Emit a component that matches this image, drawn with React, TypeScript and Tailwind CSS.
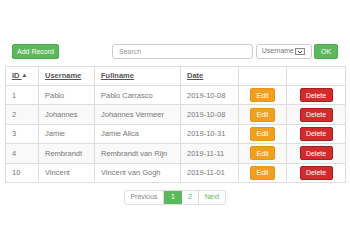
import React from 'react';

interface Row {
  id: number;
  username: string;
  fullname: string;
  date: string;
}

const rows: Row[] = [
  { id: 1, username: 'Pablo', fullname: 'Pablo Carrasco', date: '2019-10-08' },
  { id: 2, username: 'Johannes', fullname: 'Johannes Vermeer', date: '2019-10-08' },
  { id: 3, username: 'Jamie', fullname: 'Jamie Alica', date: '2019-10-31' },
  { id: 4, username: 'Rembrandt', fullname: 'Rembrandt van Rijn', date: '2019-11-11' },
  { id: 10, username: 'Vincent', fullname: 'Vincent van Gogh', date: '2019-11-01' },
];

const Toolbar: React.FC = () => (
  <div className="flex items-center h-[15px] pl-[7px]">
    <button className="h-[15px] w-[47px] rounded-[2px] bg-[#5cb85c] border border-[#4cae4c] text-white text-[7px] leading-none">
      Add Record
    </button>
    <input
      placeholder="Search"
      className="ml-[53px] h-[15px] w-[141px] rounded-[3px] border border-[#ccc] px-[6px] text-[7px] placeholder-[#999] outline-none"
    />
    <div className="ml-[3px] h-[15px] w-[56px] rounded-[3px] border border-[#ccc] flex items-center justify-end pr-[6px] gap-[1px] text-[7px] text-[#777]">
      <span>Username</span>
      <span className="h-[7px] w-[10px] border border-[#888] bg-[#f3f3f3] flex items-center justify-center">
        <svg width="6" height="4" viewBox="0 0 6 4">
          <path d="M1 1 L3 3 L5 1" fill="none" stroke="#333" strokeWidth="0.9" />
        </svg>
      </span>
    </div>
    <button className="ml-[2px] h-[15px] w-[24px] rounded-[2px] bg-[#5cb85c] border border-[#4cae4c] text-white text-[7px] leading-none">
      OK
    </button>
  </div>
);

const DataTable: React.FC = () => (
  <table className="mt-[7px] w-[340px] table-fixed border-collapse text-[7.5px] text-[#777]">
    <colgroup>
      <col className="w-[33px]" />
      <col className="w-[56px]" />
      <col className="w-[86px]" />
      <col className="w-[58px]" />
      <col className="w-[48px]" />
      <col className="w-[59px]" />
    </colgroup>
    <thead>
      <tr className="h-[19px]">
        <th className="border border-[#ddd] px-[6px] text-left font-bold text-[#555] underline">
          ID <span className="no-underline inline-block text-[6px] align-[1px]">▲</span>
        </th>
        <th className="border border-[#ddd] px-[6px] text-left font-bold text-[#555] underline">Username</th>
        <th className="border border-[#ddd] px-[6px] text-left font-bold text-[#555] underline">Fullname</th>
        <th className="border border-[#ddd] px-[6px] text-left font-bold text-[#555] underline">Date</th>
        <th className="border border-[#ddd]"></th>
        <th className="border border-[#ddd]"></th>
      </tr>
    </thead>
    <tbody>
      {rows.map((r, i) => (
        <tr key={r.id} className={`h-[19.4px] ${i % 2 === 1 ? 'bg-[#f9f9f9]' : 'bg-white'}`}>
          <td className="border border-[#ddd] px-[6px]">{r.id}</td>
          <td className="border border-[#ddd] px-[6px]">{r.username}</td>
          <td className="border border-[#ddd] px-[6px]">{r.fullname}</td>
          <td className="border border-[#ddd] px-[6px]">{r.date}</td>
          <td className="border border-[#ddd] text-center">
            <button className="h-[14px] w-[25px] rounded-[2px] bg-[#f0a01e] border border-[#e8951a] text-white text-[7px] leading-none align-middle">
              Edit
            </button>
          </td>
          <td className="border border-[#ddd] text-center">
            <button className="h-[14px] w-[33px] rounded-[2px] bg-[#d12b2b] border border-[#a81e1e] text-white text-[7px] leading-none align-middle">
              Delete
            </button>
          </td>
        </tr>
      ))}
    </tbody>
  </table>
);

const Pagination: React.FC = () => (
  <div className="mt-[7px] flex justify-center">
    <div className="flex h-[15px] text-[7px] rounded-[3px] border border-[#ddd] overflow-hidden">
      <span className="w-[39px] flex items-center justify-center text-[#888] border-r border-[#ddd]">Previous</span>
      <span className="w-[18px] flex items-center justify-center bg-[#5cb85c] text-white">1</span>
      <span className="w-[17px] flex items-center justify-center text-[#5cb85c] border-r border-[#ddd]">2</span>
      <span className="w-[26px] flex items-center justify-center text-[#5cb85c]">Next</span>
    </div>
  </div>
);

export default function App() {
  return (
    <div className="w-[350px] h-[250px] bg-white pt-[44px] px-[5px]" style={{ fontFamily: '"Liberation Sans", Arial, sans-serif' }}>
      <Toolbar />
      <DataTable />
      <Pagination />
    </div>
  );
}
